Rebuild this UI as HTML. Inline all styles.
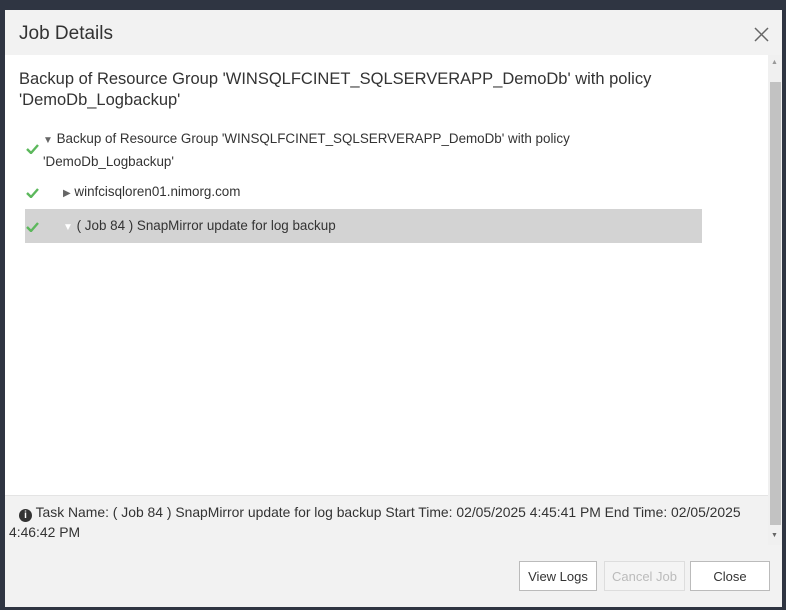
<!DOCTYPE html>
<html><head><style>
body{margin:0;width:786px;height:610px;background:#2f3542;font-family:"Liberation Sans",sans-serif;color:#333;overflow:hidden;position:relative}
.dlg{position:absolute;left:5px;top:10px;width:777px;height:597px;background:#f2f2f2}
.hdr{position:absolute;left:14px;top:13px;font-size:19px;color:#333}
.body{position:absolute;left:0;top:45px;width:763px;height:440px;background:#fff;overflow:hidden}
.sb{position:absolute;left:763px;top:45px;width:14px;height:490px;background:#f0f0f0}
.thumb{position:absolute;left:2px;top:27px;width:11px;height:443px;background:#c2c2c2}
.t{position:absolute;white-space:nowrap}
.h1{left:14px;top:14px;font-size:16.5px;line-height:21px;color:#333}
.r{font-size:13.4px;color:#333}
.ck{position:absolute}
.info{position:absolute;left:0;top:485px;width:763px;height:50px;background:#f2f2f2;border-top:1px solid #e4e4e4;font-size:13.9px}
.btn{position:absolute;top:551px;height:30px;background:#fff;border:1px solid #bbb;font-size:13px;text-align:center;line-height:30px;box-sizing:border-box}
</style></head><body>
<div class="dlg">
<div class="hdr">Job Details</div>
<svg style="position:absolute;right:13px;top:17px" width="15" height="15" viewBox="0 0 15 15"><path d="M1 1L14 14M14 1L1 14" stroke="#666" stroke-width="1.5"/></svg>
<div class="body">
<div class="t h1">Backup of Resource Group 'WINSQLFCINET_SQLSERVERAPP_DemoDb' with policy<br>'DemoDb_Logbackup'</div>
<svg class="ck" style="left:21px;top:88px" width="13" height="11"><path d="M1 6L5 10L12 2" stroke="#5cb85c" stroke-width="2.4" fill="none"/></svg>
<div class="t r" style="left:38px;top:73px;line-height:21px"><span style="font-size:10px;color:#666">▼</span> Backup of Resource Group 'WINSQLFCINET_SQLSERVERAPP_DemoDb' with policy<br>'DemoDb_Logbackup'</div>
<svg class="ck" style="left:21px;top:132px" width="13" height="11"><path d="M1 6L5 10L12 2" stroke="#5cb85c" stroke-width="2.4" fill="none"/></svg>
<div class="t r" style="left:58px;top:129px"><span style="font-size:10px;color:#666">▶</span> winfcisqloren01.nimorg.com</div>
<div style="position:absolute;left:20px;top:154px;width:677px;height:34px;background:#d3d3d3"></div>
<svg class="ck" style="left:21px;top:166px" width="13" height="11"><path d="M1 6L5 10L12 2" stroke="#5cb85c" stroke-width="2.4" fill="none"/></svg>
<div class="t r" style="left:58px;top:163px"><span style="font-size:10px;color:#fff">▼</span> ( Job 84 ) SnapMirror update for log backup</div>
</div>
<div class="sb"><div style="position:absolute;left:3px;top:4px;font-size:7px;color:#999">▲</div><div class="thumb"></div><div style="position:absolute;left:3px;top:477px;font-size:7px;color:#666">▼</div></div>
<div class="info"><div class="t" style="left:4px;top:6px;line-height:20px"><span style="padding-left:10px"><span style="display:inline-block;width:13px;height:13px;border-radius:50%;background:#333;color:#fff;font-size:10px;font-weight:bold;text-align:center;line-height:13px;vertical-align:-1px">i</span> Task Name: ( Job 84 ) SnapMirror update for log backup Start Time: 02/05/2025 4:45:41 PM End Time: 02/05/2025</span><br>4:46:42 PM</div></div>
</div>
<div class="btn" style="left:519px;width:78px;top:561px">View Logs</div>
<div class="btn" style="left:604px;width:81px;top:561px;color:#bbb;border-color:#ddd;background:#f4f4f4">Cancel Job</div>
<div class="btn" style="left:690px;width:80px;top:561px">Close</div>
</body></html>
